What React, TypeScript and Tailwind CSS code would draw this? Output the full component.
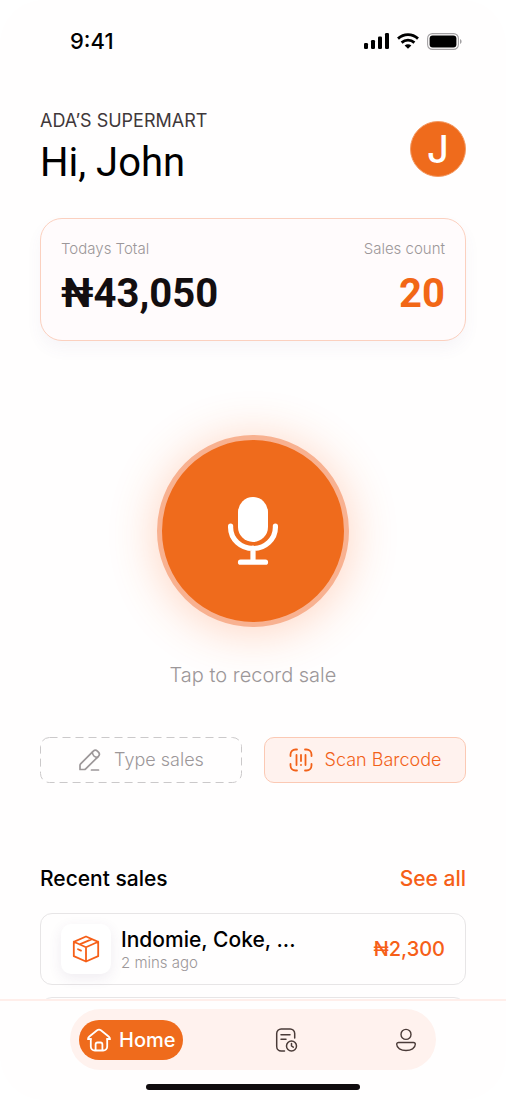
import type { ReactNode } from 'react';

const sales = [
  { id: 1, title: 'Indomie, Coke, ...', time: '2 mins ago', amount: '₦2,300' },
];

function Icon({ className, box = 24, width = 1.5, children }: { className?: string; box?: number; width?: number; children: ReactNode }) {
  return (
    <svg
      aria-hidden="true"
      viewBox={`0 0 ${box} ${box}`}
      fill="none"
      stroke="currentColor"
      strokeWidth={width}
      strokeLinecap="round"
      strokeLinejoin="round"
      className={className}
    >
      {children}
    </svg>
  );
}

function StatusBar() {
  return (
    <div className="flex h-20 shrink-0 items-center justify-between pt-0.5 pr-11 pl-[70px]">
      <span className="text-[22px] font-medium text-black">9:41</span>
      <div className="flex items-center gap-2 text-black">
        <svg aria-hidden="true" viewBox="0 0 25 16" className="h-4 w-[25px]" fill="currentColor">
          <rect x="0" y="10" width="4" height="6" rx="1.2" />
          <rect x="7" y="7" width="4" height="9" rx="1.2" />
          <rect x="14" y="3.5" width="4" height="12.5" rx="1.2" />
          <rect x="21" y="0" width="4" height="16" rx="1.2" />
        </svg>
        <svg aria-hidden="true" viewBox="0 0 22 16" className="h-4 w-[22px]" fill="none" stroke="currentColor" strokeWidth="2.8">
          <path d="M1 5.6C6.8.4 15.2.4 21 5.6" />
          <path d="M4.6 9.6c3.7-3.200 9.100-3.200 12.800 0" />
          <path d="M11 15.800 7.600 12.600c2-1.700 4.800-1.700 6.800 0z" fill="currentColor" stroke="none" />
        </svg>
        <svg aria-hidden="true" viewBox="0 0 35 17" className="h-[17px] w-[35px]">
          <rect x=".6" y=".6" width="30.8" height="15.8" rx="4.8" fill="none" stroke="#a3a1a3" strokeWidth="1.1" />
          <rect x="2.6" y="2.6" width="26.8" height="11.8" rx="3" fill="#000" />
          <path d="M33 6v5c1-.4 1.6-1.400 1.600-2.500S34 6.400 33 6z" fill="#a3a1a3" />
        </svg>
      </div>
    </div>
  );
}

function MicIcon() {
  return (
    <svg aria-hidden="true" viewBox="0 0 50 68" className="h-[68px] w-[50px]">
      <rect x="10" y="0" width="30" height="45" rx="15" fill="#fff" />
      <path
        d="M2.600 29v1.500a22.400 21 0 0 0 44.800 0V29M25 51v14M12.500 65.200h25"
        fill="none"
        stroke="#fff"
        strokeWidth="5.200"
        strokeLinecap="round"
      />
    </svg>
  );
}

export default function App() {
  return (
    <div className="flex h-screen flex-col overflow-hidden rounded-[44px] bg-[#fffefe] font-[Inter,'Noto_Sans',sans-serif]">
      <StatusBar />

      <main className="flex flex-1 flex-col overflow-hidden px-10 pt-[29px]">
        <header className="flex items-center justify-between">
          <div>
            <p className="text-lg leading-6 text-[#40383a]">ADA’S SUPERMART</p>
            <h1 className="mt-1 font-[Roboto,Inter,sans-serif] text-[40px] leading-[52px] text-black">Hi, John</h1>
          </div>
          <button
            type="button"
            aria-label="Profile"
            className="size-14 rounded-full border border-[#f49a63] bg-[#ef6b1c] text-[38px] leading-none font-medium text-white"
          >
            J
          </button>
        </header>

        <section className="mt-[29px] flex shrink-0 justify-between rounded-[22px] border border-[#fbd0bf] bg-[#fffbfc] px-5 pt-[18px] pb-[21px] shadow-[0_8px_16px_rgba(90,70,130,0.05)]">
          <div>
            <p className="text-[15px] leading-6 font-light text-[#9c9799]">Todays Total</p>
            <p className="mt-2 font-[Roboto,Inter,sans-serif] text-[40px] leading-[50px] font-bold text-[#130e10]">₦43,050</p>
          </div>
          <div className="text-right">
            <p className="text-[15px] leading-6 font-light text-[#9c9799]">Sales count</p>
            <p className="mt-2 font-[Roboto,Inter,sans-serif] text-[40px] leading-[50px] font-bold text-[#f26716]">20</p>
          </div>
        </section>

        <div className="mt-[94px] flex flex-col items-center">
          <button
            type="button"
            aria-label="Record sale"
            className="flex size-48 items-center justify-center rounded-full border-[5px] border-[#f8b190] bg-[#ef6b1c] shadow-[0_4px_48px_rgba(255,110,40,0.3)]"
          >
            <MicIcon />
          </button>
          <p className="mt-8 text-xl leading-8 font-light text-[#9c9799]">Tap to record sale</p>
        </div>

        <div className="mt-[46px] grid shrink-0 grid-cols-2 gap-[22px] text-lg font-light">
          <button type="button" className="relative flex h-[46px] items-center justify-center gap-3 text-[#9c9799]">
            <svg aria-hidden="true" className="absolute inset-0 size-full" fill="none">
              <rect x="0.5" y="0.5" rx="9" stroke="#cbc9ca" strokeDasharray="8 5" className="h-[calc(100%-1px)] w-[calc(100%-1px)]" />
            </svg>
            <Icon className="size-6" width={1.7}>
              <path d="M2 21.500v-4.200c0-.6.2-1 .6-1.400L15.300 3.200a2.900 2.900 0 0 1 4.100 0l1 1a2.900 2.900 0 0 1 0 4.100L7.700 20.900c-.4.400-.9.600-1.400.600z" />
              <path d="m14.300 4.300c.2 2.800 2.400 5 5.200 5.100M13.500 22h7" />
            </Icon>
            Type sales
          </button>
          <button
            type="button"
            className="flex h-[46px] items-center justify-center gap-3 rounded-[10px] border border-[#fbc9b4] bg-[#fff2ee] text-[#f26118]"
          >
            <Icon className="size-6" width={1.8}>
              <path d="M1.500 8V6.500a5 5 0 0 1 5-5H8M16 1.500h1.500a5 5 0 0 1 5 5V8M22.500 16v1.500a5 5 0 0 1-5 5H16M8 22.500H6.500a5 5 0 0 1-5-5V16" />
              <path d="M7.500 7v10M12 7v6M16.500 7v10M12 16.800v.2" />
            </Icon>
            Scan Barcode
          </button>
        </div>

        <div className="mt-20 flex items-center justify-between text-[21px] leading-8 font-medium">
          <h2 className="text-black">Recent sales</h2>
          <a href="#sales" className="text-[#f65f18]">See all</a>
        </div>

        <ul id="sales" className="mt-[18px] flex flex-col gap-3">
          {sales.map((sale) => (
            <li key={sale.id} className="flex h-[72px] shrink-0 items-center rounded-xl border border-[#e7e5e6] px-5">
              <div className="flex size-[50px] shrink-0 items-center justify-center rounded-[10px] bg-white text-[#f65f18] shadow-[0_4px_14px_rgba(80,60,110,0.09)]">
                <Icon className="size-7" box={28} width={1.8}>
                  <path d="M14 1.500 26.200 6.800v14.400L14 26.500 1.800 21.200V6.800zM1.800 6.800 14 12.300l12.200-5.500M14 12.300v14.200M7.600 9.300 20 4.200M6 14.200l3 1.400" />
                </Icon>
              </div>
              <div className="ml-2.5 min-w-0 flex-1">
                <p className="truncate text-[21px] leading-7 font-medium text-black">{sale.title}</p>
                <p className="text-[15px] leading-[18px] font-light text-[#9c9799]">{sale.time}</p>
              </div>
              <span className="text-xl font-medium text-[#f65f18]">{sale.amount}</span>
            </li>
          ))}
          {/* next row, still loading */}
          <li aria-hidden="true" className="h-[72px] shrink-0 rounded-xl border border-[#e7e5e6]" />
        </ul>
      </main>

      <footer className="flex shrink-0 flex-col items-center border-t-2 border-[#ffeeea] px-[70px] pt-2 pb-2.5">
        <nav className="flex h-[61px] w-full items-center justify-between rounded-full bg-[#fff2ee] pr-3 pl-[9px] text-[#4a3b38]">
          <a href="#home" aria-current="page" className="flex h-10 items-center gap-2 rounded-full bg-[#ef6b1c] px-2 text-xl font-medium text-white">
            <Icon className="size-6" width={1.8}>
              <path d="M3.800 10.800v7.700a4 4 0 0 0 4 4h8.400a4 4 0 0 0 4-4v-7.700" />
              <path d="M1 11.200c0-1.200.5-2 1.400-2.700l7.400-6a3.500 3.500 0 0 1 4.400 0l7.400 6c.9.700 1.400 1.500 1.400 2.700l-2.800-.2M1 11.200l2.800-.2" />
              <path d="M8.600 22v-5.500a2 2 0 0 1 2-2h2.800a2 2 0 0 1 2 2V22" />
            </Icon>
            Home
          </a>
          <a href="#history" aria-label="History" className="flex size-9 items-center justify-center">
            <Icon className="size-6">
              <path d="M10.500 23H7.200a4.500 4.500 0 0 1-4.500-4.500v-13A4.500 4.500 0 0 1 7.200 1h9a4.500 4.500 0 0 1 4.500 4.500V10" />
              <path d="M7 6.800h9M7 11.200h5" />
              <circle cx="17.500" cy="18" r="5" />
              <path d="M17.500 15.500V18l1.800 1.200" />
            </Icon>
          </a>
          <a href="#account" aria-label="Account" className="flex size-9 items-center justify-center">
            <Icon className="size-6" width={1.4}>
              <circle cx="12" cy="6.400" r="5" />
              <path d="M4.500 14.500h15c1 0 1.800.8 1.800 1.800 0 3.800-4.200 6.200-9.300 6.200s-9.300-2.400-9.300-6.200c0-1 .8-1.800 1.800-1.800z" />
            </Icon>
          </a>
        </nav>
        <div className="mt-3.5 h-1.5 w-[214px] rounded-full bg-[#100c0e]" />
      </footer>
    </div>
  );
}
